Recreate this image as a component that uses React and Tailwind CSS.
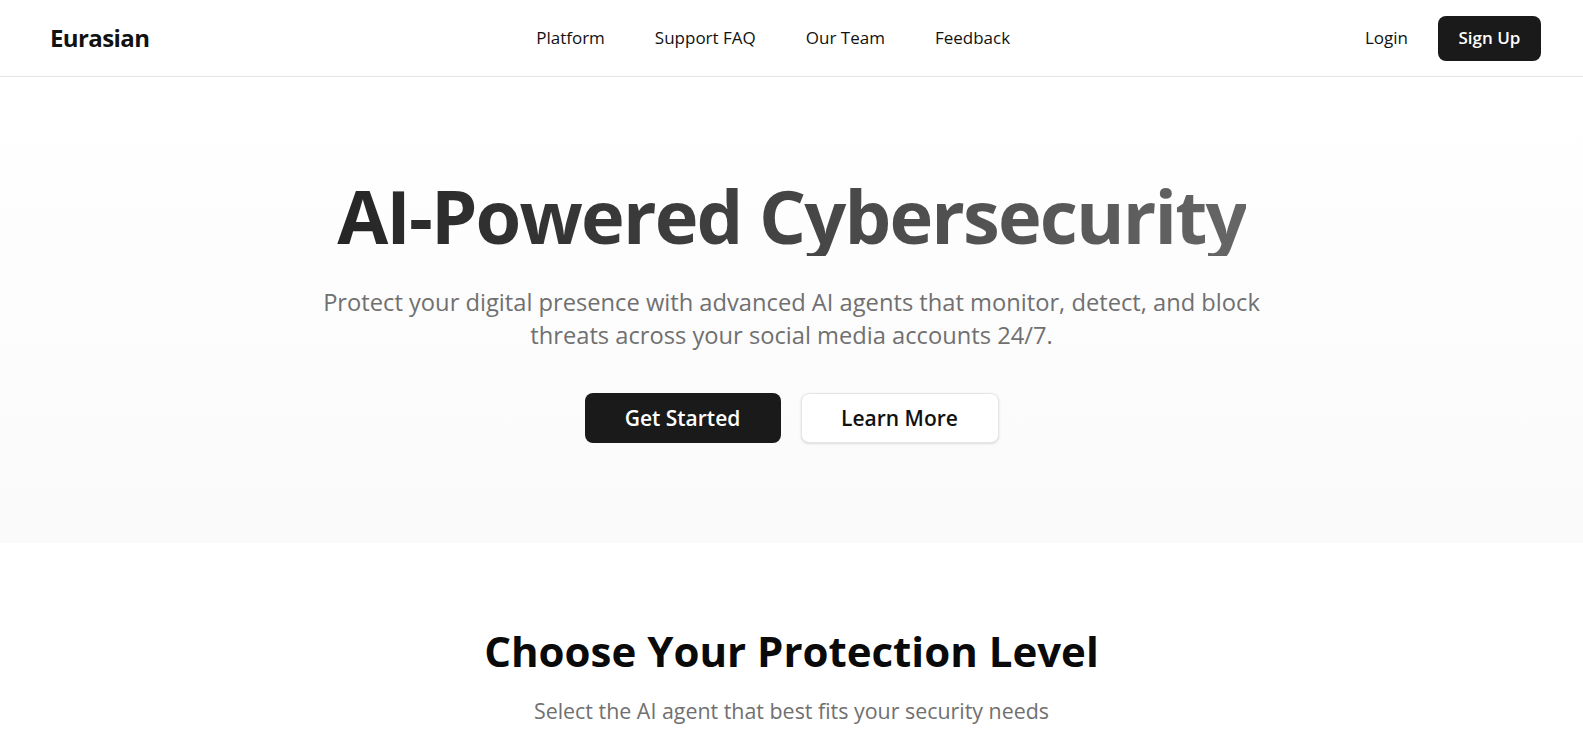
export default function App() {
  const font = { fontFamily: '"Open Sans", "Noto Sans", sans-serif' }

  return (
    <div className="min-h-screen bg-white text-[#111]" style={font}>
      {/* Nav */}
      <header className="h-[77px] border-b border-[#e5e5e5] pl-[50px] pr-[42px] flex items-center justify-between">
        <div className="text-[24px] font-bold tracking-tight text-[#111]">Eurasian</div>
        <nav className="flex items-center gap-[50px] text-[17px] font-medium text-[#111] pl-[40px]">
          <a href="#">Platform</a>
          <a href="#">Support FAQ</a>
          <a href="#">Our Team</a>
          <a href="#">Feedback</a>
        </nav>
        <div className="flex items-center gap-[22px]">
          <button className="text-[17px] font-medium text-[#111] px-2">Login</button>
          <button className="h-[45px] w-[103px] rounded-lg bg-[#1a1a1a] text-white text-[17px] font-semibold">
            Sign Up
          </button>
        </div>
      </header>

      {/* Hero */}
      <section className="bg-gradient-to-b from-white to-[#fafafa] pt-[98px] pb-[100px] flex flex-col items-center text-center">
        <h1 className="text-[74px] leading-[1.1] font-bold tracking-tight bg-gradient-to-r from-[#262626] to-[#666] bg-clip-text text-transparent">
          AI-Powered Cybersecurity
        </h1>
        <p className="mt-[30px] max-w-[960px] text-[23.7px] leading-[33px] text-[#707070]">
          Protect your digital presence with advanced AI agents that monitor, detect, and block
          <br />
          threats across your social media accounts 24/7.
        </p>
        <div className="mt-[41px] flex items-center gap-[20px]">
          <button className="w-[196px] h-[50px] rounded-lg bg-[#1a1a1a] text-white text-[21px] font-semibold">
            Get Started
          </button>
          <button className="w-[198px] h-[50px] rounded-lg bg-white border border-[#e5e5e5] text-[#111] text-[21px] font-semibold shadow-sm">
            Learn More
          </button>
        </div>
      </section>

      {/* Plans */}
      <section className="pt-[82px] pb-20 flex flex-col items-center text-center">
        <h2 className="text-[42px] leading-[1.25] font-bold text-[#0a0a0a]">Choose Your Protection Level</h2>
        <p className="mt-[17px] text-[21.4px] text-[#707070]">Select the AI agent that best fits your security needs</p>
      </section>
    </div>
  )
}
